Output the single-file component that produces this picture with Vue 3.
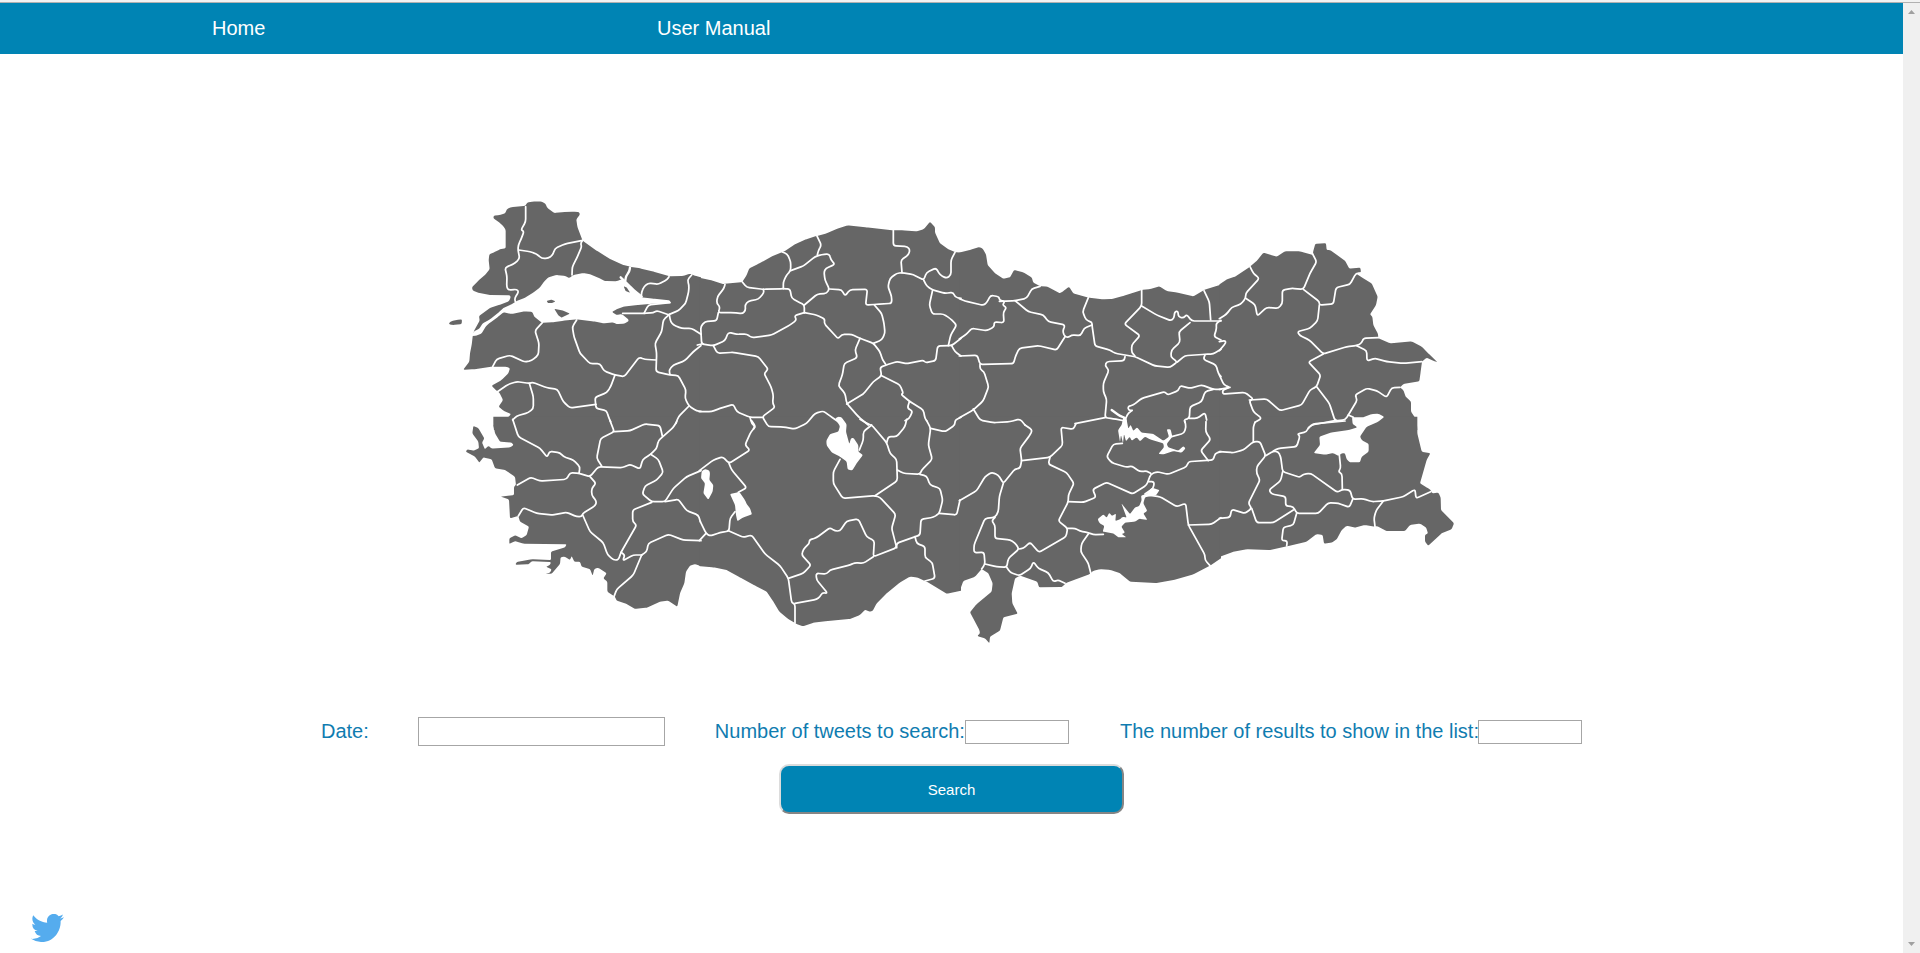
<script setup>
import { ref } from 'vue'

const date = ref('')
const tweetCount = ref('')
const resultCount = ref('')

// Map sheets: every sheet is 260 x 240 px, drawn in thirds of a pixel.
const sheets = [
  {
    x: 440, y: 190,
    land: [
      '160,85 161,77 178,75 195,70 202,56 215,51 255,48 262,38 280,34 305,35 316,41 322,54 343,69 370,66 400,65 417,66 420,73 409,88 412,110 425,145 428,152 470,182 510,207 550,225 570,230 600,235 640,245 690,259 730,258 748,251 765,257 783,262 783,720 162,720 160,703 186,702 188,687 205,682 213,672 190,662 176,650 189,630 178,608 165,598 155,587 185,570 205,550 210,535 200,530 157,530 100,538 70,539 88,515 90,490 95,465 98,440 102,423 119,392 117,378 150,354 180,344 207,334 212,322 210,316 150,315 115,308 98,302 96,292 115,272 135,255 149,238 146,210 148,193 165,186 180,178 197,175 197,120 190,108 175,95',
      '26,400 35,393 50,390 66,388 65,402 40,405 30,404'
    ],
    water: [
      '102,424 118,416 128,400 150,388 175,368 190,354 215,343 230,333 255,323 280,308 300,292 312,275 325,262 350,255 375,258 388,264 400,255 430,249 450,253 475,263 495,273 530,274 545,268 556,275 575,292 605,322 640,326 690,331 692,340 640,341 590,345 550,350 530,358 516,366 530,375 545,372 565,388 566,393 553,401 530,402 520,397 490,400 460,394 410,388 370,392 340,397 305,398 283,380 277,366 255,364 215,372 190,367 175,380 150,398 138,408 125,430 110,437 94,438'
    ],
    islands: ['320,333 335,329 346,334 336,339 324,339', '343,357 355,359 370,362 389,371 365,383 355,376', '551,289 560,292 570,308 557,303'],
    wide: ['570,232 568,245 558,258 556,272', '542,262 575,295 605,320'],
    borders: [
      '257,50 257,95 243,120 252,124 243,148 235,165 234,180 239,205 225,220 195,233 201,260 200,290 205,300 230,298 236,305 224,325 226,335',
      '236,180 270,185 290,192 305,205 325,205 338,195 345,175 375,162 428,151',
      '428,151 422,160 425,170 410,205 397,230 396,255',
      '687,260 682,268 655,283 625,279 612,290 605,305 604,320',
      '755,255 742,270 747,285 746,305 737,340 715,362 688,373',
      '548,370 612,370 640,368 650,362 688,375', '612,370 625,345 690,338',
      '688,373 670,390 665,425 645,460 650,490 648,545 690,555 715,557 738,600 735,625 747,648 770,663 783,664',
      '688,375 692,395 700,405 725,415 755,415 783,433',
      '783,467 760,485 735,512 700,525 687,540 690,553',
      '747,648 715,680 708,700',
      '307,398 285,422 297,460 295,495 275,512 255,516 210,496 170,507 158,530',
      '410,390 397,410 402,440 420,490 450,521 480,521 492,543 525,555 553,560 597,502 615,508 648,510',
      '525,555 512,590 500,608 465,622 468,655 500,662 505,680 512,695',
      '468,643 390,654 370,635 352,598 320,593 278,577 268,580 230,575 205,583 170,607',
      '268,580 280,620 280,655 265,668 230,678 218,690'
    ]
  },
  {
    x: 700, y: 190,
    land: ['-2,263 30,270 70,282 127,276 140,255 148,235 175,222 220,197 255,183 285,163 320,147 350,138 380,130 410,117 443,106 500,112 580,121 610,121 650,124 672,117 690,95 705,112 705,128 720,160 745,178 765,186 783,188 783,720 -2,720'],
    borders: [
      '75,283 72,295 52,320 50,340 60,350 55,368 100,368 128,371 137,360 135,345 145,333 175,328 192,308 190,298',
      '127,276 140,292 190,298 250,296 270,297 275,325 300,338 313,345 313,368',
      '250,296 250,275 260,255 272,242 272,215 262,192 247,186',
      '272,242 310,228 345,200 365,194 388,192 393,210 405,223 378,235 372,245 375,270 388,297 380,310 352,312 313,345',
      '352,195 355,182 364,165 350,136',
      '388,297 425,299 435,318 450,299 502,298 497,345 530,343 575,340 575,320 564,290 570,265 590,250 606,248 640,254 671,270 680,247 708,234 720,255 740,265 753,255 753,210 765,187',
      '606,248 603,210 625,195 630,180 622,170 580,167 580,121',
      '671,270 680,288 698,300 735,310 760,307 765,322 783,325',
      '698,300 688,345 697,372 730,372 750,385 770,405 752,435 745,467',
      '523,345 545,370 552,400 555,430 545,450 520,460',
      '313,368 350,375 375,388 372,400 415,447 425,433 455,433 480,445 520,460 540,485 547,508 557,523',
      '55,368 50,392 15,395 2,410 5,462 40,467 75,452 85,427 110,433 140,432 155,443 215,435 270,405 290,390 283,377 313,368',
      '-8,465 5,462',
      '40,467 52,490 100,487 175,500 205,538 192,550 213,590 220,615 218,640 225,652 187,680 205,710 250,711 285,717 320,700 345,670 370,663 390,678 415,695',
      '480,445 465,480 472,503 433,520 427,555 415,587 435,610 440,640 475,680 505,705',
      '440,642 490,612 520,575 545,557 540,532 565,523 590,515 620,521 670,511 677,518 707,512 713,468 755,467 783,445',
      '755,467 765,485 783,498',
      '545,557 600,585 610,610 603,613 630,635 670,660 675,685 680,692',
      '628,635 622,655 638,663 628,685 615,692',
      '-2,665 35,665 60,655 100,643 110,665 150,682 187,682',
      '150,682 155,700 165,710 160,717'
    ]
  },
  {
    x: 960, y: 190,
    land: ['-2,188 30,180 57,171 68,176 78,193 83,225 105,250 130,266 150,262 162,240 190,247 215,262 220,278 240,288 262,290 300,310 312,302 327,290 340,310 385,323 430,328 455,327 490,318 545,300 570,297 598,289 620,303 650,307 700,319 732,300 783,284 783,720 -2,720'],
    wide: ['455,660 480,678 497,684 497,710'],
    borders: [
      '-2,326 15,333 70,346 80,338 92,316 117,320 118,330 135,335 127,345 140,352 130,367 132,398 102,396 103,410 80,422 35,415 20,432 -2,447',
      '118,334 165,332 200,325 215,297 240,289',
      '165,332 205,365 250,375 265,395 315,405 308,425 315,440 325,442 335,435 362,437 372,415 396,405',
      '315,440 290,480 235,467 178,475 168,495 160,521 60,523 52,496 -2,498',
      '60,523 60,538 72,545 86,590 70,632 40,660 -2,683',
      '40,657 60,690 100,698 150,695 180,687 195,705',
      '385,323 368,365 378,390 396,397 396,405 405,468 450,480 465,490 525,500 585,528 630,532 652,516 632,500 635,480 660,457 657,425 690,398',
      '545,298 545,348 493,402 540,437 515,465 515,487 525,498',
      '545,348 590,375 632,392 642,385 644,365 654,363 655,380 670,385 680,373 695,393 750,393 783,393',
      '732,302 748,335 752,390', '783,391 768,400 770,415 762,440 783,450',
      '652,516 675,497 735,493 760,492 783,478', '735,495 730,508 768,525 775,550 783,560',
      '495,500 492,512 440,515 435,527 447,540 430,580 430,605 440,628 435,683 460,686 495,693',
      '435,683 345,701',
      '783,598 760,598 725,585 690,595 660,587 655,602 622,615 615,605 545,625 520,645 503,650 507,662 520,660 505,668 495,690',
      '760,598 735,605 725,635 690,650 688,685 672,690 675,697', '688,685 712,685 735,668 740,690'
    ]
  },
  {
    x: 1220, y: 190,
    land: ['-2,284 20,268 45,260 90,230 110,213 130,188 170,200 195,184 240,184 280,195 279,186 286,161 318,160 320,180 330,180 375,212 388,236 421,233 423,247 410,252 425,262 455,280 473,320 468,345 450,373 457,380 460,405 474,432 475,445 510,460 575,454 605,470 625,490 653,517 640,512 620,503 606,515 602,545 598,574 550,582 540,592 550,600 557,620 573,635 573,665 590,690 592,720 -2,720'],
    borders: [
      '90,230 100,250 118,265 77,310 77,325 62,343 35,352 20,372 -2,386',
      '77,325 105,343 112,378 140,352 175,355 187,340 187,300 215,295 250,298 270,250 290,215 278,192',
      '250,298 298,335 298,345 340,342 348,293 390,283 408,250 425,249',
      '298,345 293,392 270,415 232,425 240,437 268,450 310,492 380,470 410,467 425,460 430,445 475,443',
      '410,467 440,482 441,513 465,505 500,515 550,520 606,515',
      '310,492 265,516 302,555 290,590 270,600 245,645 180,662 140,627 88,630',
      '290,590 328,640 345,692 375,690 385,675 412,630 405,615 440,595 470,602 500,622 515,593 540,592',
      '385,675 400,682', '345,692 275,705 265,715',
      '-2,555 12,585 30,592 8,600 8,612 75,607 100,627 88,632 100,665 125,685 105,697',
      '30,592 -2,598', '-2,455 15,452 18,458 -2,482'
    ]
  },
  {
    x: 440, y: 420,
    land: ['160,-10 160,13 165,40 180,65 215,68 221,75 210,82 155,86 145,77 135,88 126,68 133,55 115,24 100,18 97,40 115,65 117,85 100,92 82,88 77,95 105,110 118,128 130,112 155,118 165,145 195,150 225,170 228,195 222,200 222,225 182,230 207,238 210,295 235,288 240,305 267,320 260,345 245,355 225,346 208,355 208,372 225,363 250,371 380,373 375,382 333,395 333,420 275,418 230,426 226,434 265,433 275,424 333,426 330,435 318,440 335,448 330,458 316,461 335,461 360,432 362,411 375,410 390,420 395,408 403,425 420,425 425,440 450,447 458,467 463,447 475,443 500,460 490,475 502,485 502,515 525,530 530,542 560,552 585,567 620,563 660,545 685,542 712,560 720,520 733,490 738,455 750,437 765,432 783,439 783,-10'],
    borders: [
      '218,-2 235,50 300,85 322,112 328,94 360,98 370,110 400,120 420,140 417,160',
      '232,195 272,172 300,183 380,178 390,158 417,160 450,170 475,140 548,143 570,133 600,147 608,118 632,103 650,85 655,62 700,22 710,5',
      '510,2 523,35 482,55 470,115 485,138', '523,35 570,32 615,12 660,17 667,48',
      '632,103 655,118 670,157 650,180 615,198 607,222 635,245 675,245 700,205 740,170 783,152',
      '450,170 468,190 455,205 455,225 470,245 465,258 428,280 425,290 410,290 380,277 335,285 290,280 250,263 235,288',
      '428,285 450,335 490,368 502,403 520,420 535,420 543,397 590,315 578,305 578,270 635,247',
      '543,397 555,405 548,422 580,405 605,405',
      '675,245 715,238 740,272 775,285 781,305', '605,405 580,465 530,508 522,530',
      '605,405 620,395 625,370 685,343 730,360 783,362'
    ]
  },
  {
    x: 700, y: 420,
    land: ['-2,-10 783,-10 783,512 740,521 680,485 650,472 630,470 600,487 560,520 530,550 518,573 510,575 495,569 480,585 450,597 380,603 340,608 310,619 290,612 265,597 238,575 220,545 200,515 165,497 120,472 80,450 40,442 -2,438'],
    water: [
      '405,-4 415,-10 425,-8 440,13 438,35 448,72 453,55 460,53 475,75 475,95 489,105 470,130 457,151 443,149 440,125 420,110 395,97 380,76 379,62 390,42 415,35 420,18',
      '5,154 15,147 28,151 30,160 28,180 40,195 38,215 25,239 10,220 15,190 3,175',
      '90,222 118,216 135,240 140,252 150,265 156,283 130,292 112,304 108,285 105,255'
    ],
    borders: [
      '155,2 167,20 153,35 135,75 150,90 87,130 68,110 40,120 -2,152',
      '87,130 95,150 140,203 115,217', '105,275 90,295 87,333 60,338 30,348 18,340 1,305', '18,340 -2,362',
      '87,333 130,352 155,345 195,402 240,437 265,475 275,548 285,552 285,608',
      '265,475 310,460 333,435 305,405 310,388 328,370 328,360 350,353 390,323 405,333 420,333 440,303 475,297 500,350 523,362 520,410 590,383 575,325 587,283 540,232 525,227 428,235 400,190 400,155 420,118',
      '525,227 592,182 590,118 570,100 560,68 515,15 503,12 480,-2',
      '520,410 490,430 465,428 450,435 390,450 380,462 348,460 350,480 383,520 367,518 360,530 350,538 285,550',
      '560,68 565,50 590,50 615,20 620,-2',
      '592,150 610,160 660,163 665,150 697,118 685,75 692,25 680,2', '692,25 735,35 765,15 765,0 783,-8',
      '660,163 680,168 690,195 720,205 728,240 718,280 700,292 663,298 660,345 590,370 590,383',
      '718,280 770,285 780,240', '645,350 650,370 675,380 675,412 697,428 705,475 675,483',
      '515,15 490,35 490,60 478,90'
    ]
  },
  {
    x: 960, y: 420,
    land: ['-2,-10 783,-10 783,415 750,437 700,463 640,480 590,489 510,485 480,460 450,449 420,448 400,452 390,462 320,488 305,501 237,502 232,485 180,467 165,475 155,520 157,550 173,581 130,592 120,632 90,650 88,670 75,655 52,648 60,640 58,630 30,577 50,552 95,515 98,490 85,460 65,447 45,470 10,483 0,510 -2,512'],
    water: [
      '490,-10 500,0 505,26 512,14 520,33 531,22 545,38 580,42 610,62 627,50 620,28 632,28 637,50 620,72 625,82 655,92 670,78 677,85 665,98 640,93 610,103 595,102 612,82 610,70 570,58 555,50 540,64 530,52 515,62 509,50 498,64 492,42 489,70 483,45 480,66 474,30 485,15',
      '413,297 430,283 440,293 448,278 456,288 468,281 466,303 480,298 488,290 500,293 484,250 510,282 525,262 538,258 545,240 543,227 560,222 575,203 599,210 588,226 555,232 550,250 562,273 550,280 562,300 538,296 525,305 495,308 484,320 495,338 485,342 499,352 475,352 460,340 428,335 433,318 418,309'
    ],
    borders: [
      '195,15 217,30 210,45 180,85 185,122 180,145 165,147 130,190 115,165 95,157 75,170 50,212 -2,242',
      '185,122 270,112 308,75 303,22 340,28 348,11', '270,112 265,132 320,158 342,190 325,225 325,245 295,303 323,325 318,350 237,397 210,367 190,385 177,387',
      '325,245 370,247 408,232 398,208 440,187 518,222 560,195 572,163 590,155 625,163 680,140 685,125 760,120 765,100 783,95',
      '487,70 460,72 440,110 455,128 500,142 515,138 540,155 560,153 572,160',
      '323,325 345,325 360,333 385,338 400,344 430,343', '385,342 365,370 362,395 385,430 393,462',
      '130,190 118,230 115,275 105,292 75,295 42,375 42,398 72,397 75,432 65,447',
      '105,292 95,303 105,315 105,355 150,360 165,368 177,387 145,415 140,442 110,440 75,432',
      '140,442 150,457 178,467 212,445 220,425 235,445 265,458 280,485 295,480 315,490',
      '560,225 600,230 650,260 677,250 685,315 735,405 735,420 750,437', '685,315 755,313 783,293',
      '567,185 583,185 580,205 555,222', '675,5 678,20 672,40 635,50', '738,5 737,35 752,58 722,92 745,122'
    ]
  },
  {
    x: 1220, y: 420,
    land: ['-2,-10 592,-10 592,40 605,95 631,100 620,120 600,190 620,202 632,210 636,220 655,218 662,232 663,270 702,310 695,328 665,340 625,377 615,365 615,345 624,340 618,322 600,311 570,315 555,333 500,333 470,318 465,320 435,315 405,323 380,317 365,330 350,358 335,368 312,371 308,345 290,342 260,365 205,378 150,390 80,388 40,395 -2,411'],
    water: ['396,-8 430,-8 455,-18 475,-19 493,-9 475,5 440,20 420,50 425,60 446,72 446,95 425,110 420,127 390,127 380,118 375,100 365,100 355,108 340,99 315,104 281,99 300,75 298,50 335,37 385,30 412,22 398,12'],
    borders: [
      '-2,95 40,98 70,90 100,65 120,65 137,107 110,140 110,160 120,180 85,250 95,265 75,280 35,268 30,292 -2,295',
      '100,65 100,20 105,7',
      '137,107 160,93 175,95 182,110 188,155 240,172 250,162 272,160 352,217 367,208 390,210 398,238 430,236 455,245 490,243 550,230 585,208 588,235 632,215',
      '160,93 175,85 230,80 240,48 232,42 260,35 265,22 280,12 375,3',
      '188,155 182,182 147,210 155,222 197,230 197,258 220,260 230,280 295,280 325,248 355,250 388,262 398,238',
      '95,265 110,308 160,308 220,270', '230,280 220,315 190,322 185,362 202,362 200,378',
      '490,243 468,272 462,295 465,320', '358,105 362,145 355,155 366,162 367,208'
    ]
  }
]

const place = (s) => `translate(${s.x - 440} ${s.y - 190}) scale(0.33333)`

// Eases the corners of a polyline with short quadratic curves.
function curve(text, closed = false, reach = 8) {
  const p = text.split(' ').map((pair) => pair.split(',').map(Number))
  const n = p.length
  const out = []
  const cut = (u, v) => {
    const len = Math.hypot(v[0] - u[0], v[1] - u[1]) || 1
    const k = Math.min(0.5, reach / len)
    return [u[0] + (v[0] - u[0]) * k, u[1] + (v[1] - u[1]) * k]
  }
  const bend = (a, b, c) => {
    const s = cut(b, a)
    const e = cut(b, c)
    return `L${s[0].toFixed(1)} ${s[1].toFixed(1)}Q${b[0]} ${b[1]} ${e[0].toFixed(1)} ${e[1].toFixed(1)}`
  }
  if (closed) {
    for (let i = 0; i < n; i++) out.push(bend(p[(i + n - 1) % n], p[i], p[(i + 1) % n]))
    return 'M' + out.join('').slice(1) + 'Z'
  }
  out.push(`M${p[0][0]} ${p[0][1]}`)
  for (let i = 1; i < n - 1; i++) out.push(bend(p[i - 1], p[i], p[i + 1]))
  out.push(`L${p[n - 1][0]} ${p[n - 1][1]}`)
  return out.join('')
}

// Sheet edges keep their square corners so neighbouring sheets join without gaps.
const outline = (text) => {
  const edge = (v) => /^(-2|783),|,(-10|720)$/.test(v)
  return curve(text.split(' ').flatMap((v) => (edge(v) ? [v, v] : [v])).join(' '), true, 4)
}
</script>

<template>
  <div class="window">
    <div class="topline"></div>
    <div class="viewport">
      <div class="page">
        <nav class="nav">
          <a class="home">Home</a>
          <a class="manual">User Manual</a>
        </nav>
        <svg class="map" width="1040" height="470" viewBox="0 0 1040 470">
          <g v-for="(s, i) in sheets" :key="'l' + i" :transform="place(s)">
            <path v-for="(d, j) in s.land" :key="j" class="land" :d="outline(d)" />
          </g>
          <g v-for="(s, i) in sheets" :key="'b' + i" :transform="place(s)">
            <path v-for="(d, j) in s.water" :key="'w' + j" class="water" :d="curve(d, true, 4)" />
            <path v-for="(d, j) in s.borders" :key="'p' + j" class="border" :d="curve(d)" />
            <path v-for="(d, j) in s.wide" :key="'s' + j" class="border wide" :d="curve(d)" />
            <path v-for="(d, j) in s.islands" :key="'i' + j" class="land" :d="curve(d, true, 2)" />
          </g>
        </svg>
        <form class="search" @submit.prevent>
          <div class="fields">
            <label class="date"><span>Date:</span><input v-model="date" type="text" /></label>
            <label class="count tweets"><span>Number of tweets to search:</span><input v-model="tweetCount" type="text" /></label>
            <label class="count results"><span>The number of results to show in the list:</span><input v-model="resultCount" type="text" /></label>
          </div>
          <button type="submit">Search</button>
        </form>
        <svg class="bird" width="33" height="28" viewBox="0 2.25 24 19.5" preserveAspectRatio="none">
          <path d="M23.953 4.57a10 10 0 01-2.825.775 4.958 4.958 0 002.163-2.723c-.951.555-2.005.959-3.127 1.184a4.92 4.92 0 00-8.384 4.482C7.69 8.095 4.067 6.13 1.64 3.162a4.822 4.822 0 00-.666 2.475c0 1.71.87 3.213 2.188 4.096a4.904 4.904 0 01-2.228-.616v.06a4.923 4.923 0 003.946 4.827 4.996 4.996 0 01-2.212.085 4.936 4.936 0 004.604 3.417 9.867 9.867 0 01-6.102 2.105c-.39 0-.779-.023-1.17-.067a13.995 13.995 0 007.557 2.209c9.053 0 13.998-7.496 13.998-13.985 0-.21 0-.42-.015-.63A9.935 9.935 0 0024 4.59z" />
        </svg>
      </div>
      <div class="scrollbar">
        <svg width="7" height="4" viewBox="0 0 7 4"><path d="M0 4L3.5 0L7 4Z" /></svg>
        <svg width="7" height="4" viewBox="0 0 7 4"><path d="M0 0L3.5 4L7 0Z" /></svg>
      </div>
    </div>
  </div>
</template>

<style>
body {
  overflow: hidden;
  background: #fff;
}
</style>

<style scoped>
.window {
  display: flex;
  flex-direction: column;
  width: 1920px;
  height: 953px;
  overflow: hidden;
  font-family: "Liberation Sans", Arial, sans-serif;
}
.topline {
  flex: none;
  box-sizing: border-box;
  height: 3px;
  background: #f2f2f2;
  border-bottom: 1px solid #b1b1b1;
}
.viewport {
  display: flex;
  flex: 1;
  min-height: 0;
}
.page {
  display: flex;
  flex-direction: column;
  width: 1903px;
}
.nav {
  display: flex;
  align-items: center;
  flex: none;
  height: 51px;
  box-sizing: border-box;
  padding-left: 212px;
  background: #0084b4;
  color: #fff;
  font-size: 20px;
  line-height: 23px;
}
.home {
  width: 445px;
}
.map {
  flex: none;
  display: block;
  margin: 136px 0 0 440px;
}
.land {
  fill: #666;
}
.water {
  fill: #fff;
}
.border {
  fill: none;
  stroke: #fff;
  stroke-width: 5.2;
  stroke-linejoin: round;
  stroke-linecap: round;
}
.wide {
  stroke-width: 7;
}
.search {
  display: flex;
  flex-direction: column;
  align-items: center;
  margin-top: 57px;
}
.fields {
  display: flex;
  align-items: center;
  height: 29px;
  color: #0f7cb0;
  font-size: 20px;
  line-height: 23px;
}
label {
  display: flex;
  align-items: center;
  white-space: nowrap;
}
input {
  box-sizing: border-box;
  margin: 0;
  padding: 1px 4px;
  border: 1px solid #a6a6a6;
  background: #fff;
  font: 14px "Liberation Sans", Arial, sans-serif;
  outline: none;
}
.date {
  gap: 49px;
  margin-right: 50px;
}
.date input {
  width: 247px;
  height: 29px;
}
.count input {
  width: 104px;
  height: 24px;
}
.tweets {
  margin-right: 51px;
}
.results span {
  margin-right: -1px;
}
button {
  box-sizing: border-box;
  width: 345px;
  height: 50px;
  margin-top: 18px;
  padding: 0;
  border: 2px solid;
  border-color: #dcdcdc #858585 #858585 #dcdcdc;
  border-radius: 10px;
  background: #0084b4;
  color: #fff;
  font: 15px "Liberation Sans", Arial, sans-serif;
}
.bird {
  display: block;
  margin: auto 0 11px 31px;
  fill: #55acee;
}
.scrollbar {
  display: flex;
  flex-direction: column;
  justify-content: space-between;
  align-items: center;
  box-sizing: border-box;
  width: 17px;
  padding: 7px 0;
  background: #f0f0f0;
  fill: #a0a0a0;
}
</style>
